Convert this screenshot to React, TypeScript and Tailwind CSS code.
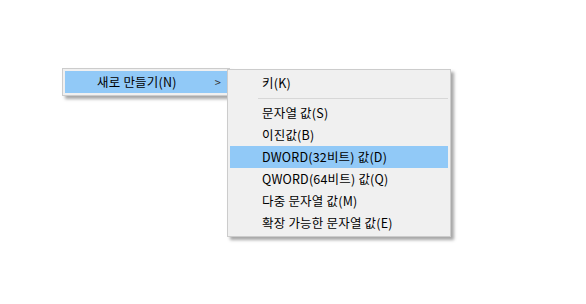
const ITEMS = [
  "문자열 값(S)",
  "이진값(B)",
  "DWORD(32비트) 값(D)",
  "QWORD(64비트) 값(Q)",
  "다중 문자열 값(M)",
  "확장 가능한 문자열 값(E)",
];

const FONT = { fontFamily: '"Segoe UI", "Noto Sans CJK KR", "Noto Sans", sans-serif' };

export default function App() {
  return (
    <div className="relative w-[586px] h-[304px] bg-white text-[12.5px] tracking-[0.2px] text-black" style={FONT}>
      {/* PARENT MENU */}
      <div className="absolute left-[62px] top-[68px] w-[168px] border border-[#cccccc] bg-[#f0f0f0] p-[2px] shadow-[3px_3px_3px_rgba(0,0,0,0.35)]">
        <div className="flex h-[22px] items-center bg-[#91c9f7] pl-[32px] pr-[6px]">
          <span className="flex-1">새로 만들기(N)</span>
          <span className="text-[11px] text-[#333]">&gt;</span>
        </div>
      </div>

      {/* SUBMENU */}
      <div className="absolute left-[227px] top-[69px] w-[224px] border border-[#cccccc] bg-[#f0f0f0] p-[2px] shadow-[3px_3px_3px_rgba(0,0,0,0.35)]">
        <div className="flex h-[22px] items-center pl-[32px]">키(K)</div>
        <div className="flex h-[8px] items-center pl-[28px]">
          <div className="h-px w-full bg-[#d7d7d7]" />
        </div>
        {ITEMS.map((item, i) => (
          <div
            key={item}
            className={
              i === 2
                ? "flex h-[22px] items-center bg-[#91c9f7] pl-[32px]"
                : "flex h-[22px] items-center pl-[32px]"
            }
          >
            {item}
          </div>
        ))}
      </div>
    </div>
  );
}
